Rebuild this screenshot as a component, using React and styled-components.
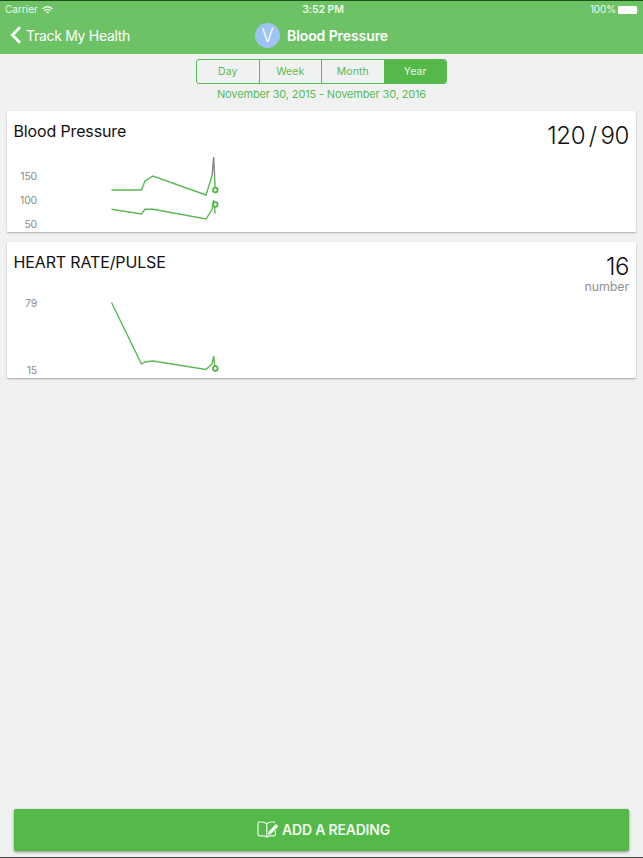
import React from 'react';
import styled, { createGlobalStyle } from 'styled-components';

const GlobalStyle = createGlobalStyle`
  * {
    box-sizing: border-box;
  }
  body {
    margin: 0;
    font-family: Inter, 'Liberation Sans', sans-serif;
    background-color: #f0f2f1;
  }
`;

const Screen = styled.div`
  width: 100%;
  height: 100vh;
  display: flex;
  flex-direction: column;
  overflow: hidden;
  border-top: 1px solid #1d5216;
  border-bottom: 1px solid #4b4d4c;
`;

const Header = styled.header`
  height: 53px;
  flex: none;
  color: white;
  background-color: #6cc265;
`;

const StatusBar = styled.div`
  height: 17px;
  padding: 0 4px 0 5px;
  display: grid;
  grid-template-columns: 1fr auto 1fr;
  align-items: center;
  font-size: 10px;
  line-height: 17px;
  color: #edf9ec;
`;

const Carrier = styled.div`
  display: flex;
  align-items: center;
  gap: 4px;
`;

const Clock = styled.div`
  padding-left: 2px;
  font-size: 10.5px;
  font-weight: 600;
  letter-spacing: -0.1px;
`;

const Battery = styled.div`
  display: flex;
  justify-content: flex-end;
  align-items: center;
  gap: 2px;
  letter-spacing: -0.1px;
`;

const NavBar = styled.nav`
  height: 34px;
  padding: 0 10px;
  display: grid;
  grid-template-columns: 1fr auto 1fr;
  align-items: center;
`;

const BackLink = styled.a`
  display: flex;
  align-items: center;
  gap: 4px;
  font-size: 14px;
  letter-spacing: -0.3px;
`;

const Title = styled.h1`
  margin: 0;
  display: flex;
  align-items: center;
  gap: 7px;
  font-size: 14px;
  font-weight: 600;
  letter-spacing: -0.09px;
`;

const Avatar = styled.span`
  width: 25px;
  height: 25px;
  border-radius: 50%;
  display: flex;
  justify-content: center;
  align-items: center;
  font-size: 18px;
  font-weight: 300;
  background-color: #9dc4f5;
`;

const RangePicker = styled.div`
  height: 57px;
  flex: none;
  padding-top: 5px;
  display: flex;
  flex-direction: column;
  align-items: center;
`;

const Segments = styled.div`
  width: 251px;
  height: 25px;
  display: flex;
  border: 1px solid #5bb955;
  border-radius: 3px;
  overflow: hidden;
`;

const Segment = styled.button`
  flex: 1;
  padding: 0;
  border: 0;
  border-right: ${(props) => (props.$last ? '0' : '1px solid #5bb955')};
  font-family: inherit;
  font-size: 10.5px;
  letter-spacing: 0.1px;
  color: ${(props) => (props.$active ? '#e6f6e4' : '#5bb955')};
  background-color: ${(props) => (props.$active ? '#55b949' : 'transparent')};
`;

const DateRange = styled.div`
  margin-top: 4px;
  font-size: 11px;
  line-height: 13px;
  letter-spacing: -0.15px;
  color: #5bb955;
`;

const Cards = styled.main`
  flex: 1;
  padding: 0 7px;
  display: flex;
  flex-direction: column;
  gap: 10px;
`;

const Card = styled.section`
  height: ${(props) => props.$height}px;
  flex: none;
  display: flex;
  flex-direction: column;
  background-color: white;
  border-radius: 1px;
  box-shadow: 0 1px 2px rgba(0, 0, 0, 0.3);
`;

const CardHeader = styled.div`
  height: 38px;
  flex: none;
  padding: 10px 7px 0 6.5px;
  display: flex;
  justify-content: space-between;
  align-items: flex-start;
`;

const CardTitle = styled.h2`
  margin: 0;
  font-size: 16px;
  line-height: 20px;
  font-weight: 400;
  letter-spacing: -0.14px;
  color: #111;
`;

const Reading = styled.div`
  padding-top: 1px;
  text-align: right;
`;

const Value = styled.div`
  font-size: 24px;
  line-height: 28px;
  font-weight: 300;
  letter-spacing: -0.4px;
  word-spacing: -2.6px;
  color: #111;
`;

const Unit = styled.div`
  margin-top: -1px;
  font-size: 12.5px;
  line-height: 13px;
  letter-spacing: -0.15px;
  color: #929292;
`;

const Chart = styled.svg`
  display: block;
  flex: none;

  text {
    font-size: 10.5px;
    letter-spacing: -0.2px;
    text-anchor: end;
    fill: #8b8b8b;
  }
  circle {
    fill: white;
    stroke: #4fb545;
    stroke-width: 1.8;
  }
`;

const Line = styled.polyline`
  fill: none;
  stroke: ${(props) => (props.$muted ? '#858585' : '#5bb955')};
  stroke-width: 1.4;
`;

const Footer = styled.footer`
  flex: none;
  padding: 0 14px 6px;
`;

const AddButton = styled.button`
  width: 100%;
  height: 42px;
  padding: 0 0 2px 4px;
  border: 0;
  border-radius: 2px;
  display: flex;
  justify-content: center;
  align-items: center;
  gap: 3px;
  font-family: inherit;
  font-size: 14px;
  font-weight: 600;
  letter-spacing: -0.2px;
  color: #f0faef;
  background-color: #55b949;
  box-shadow: 0 1px 3px rgba(0, 0, 0, 0.45);
`;

const WifiIcon = () => (
  <svg width="11" height="8" viewBox="0 0 11 8" fill="none" stroke="currentColor" strokeWidth="1.3">
    <path d="M0.6 3 Q5.5 -1.4 10.4 3" />
    <path d="M2.4 4.8 Q5.5 2 8.6 4.8" />
    <path d="M5.5 7.8 L3.8 6 Q5.5 4.7 7.2 6 Z" fill="currentColor" stroke="none" />
  </svg>
);

const BatteryIcon = () => (
  <svg width="21" height="8" viewBox="0 0 21 8" fill="white">
    <rect width="19" height="8" rx="1.2" />
    <path d="M19.6 2.5 Q21 4 19.6 5.5 Z" />
  </svg>
);

const BackIcon = () => (
  <svg width="12" height="18" viewBox="0 0 12 18" fill="none" stroke="white" strokeWidth="2.8">
    <path d="M10 1.2 L2.4 9 L10 16.8" />
  </svg>
);

const JournalIcon = () => (
  <svg width="22" height="17" viewBox="0 0 22 17" fill="none" stroke="currentColor" strokeWidth="1.2">
    <path d="M9.8 3 Q8 0.9 5 1 H2.4 Q1 1 1 2.4 V13.2 Q1 14.8 2.6 14.8 H5.6 Q8.4 14.8 9.8 16 V3 Q11.6 0.9 14.6 1 H16.6 Q17.6 1 18 1.8" />
    <path d="M9.8 16 Q11.4 14.8 14 14.8 H17 Q18.4 14.8 18.4 13.4 V9.6" />
    <path d="M18.9 2.9 L21.4 5.2 L14.2 12.8 L10.9 14.2 L11.8 10.6 Z" fill="currentColor" stroke="none" />
  </svg>
);

const periods = ['Day', 'Week', 'Month', 'Year'];

const App = () => {
  return (
    <Screen>
      <GlobalStyle />
      <Header>
        <StatusBar>
          <Carrier>Carrier <WifiIcon /></Carrier>
          <Clock>3:52 PM</Clock>
          <Battery>100% <BatteryIcon /></Battery>
        </StatusBar>
        <NavBar>
          <BackLink><BackIcon />Track My Health</BackLink>
          <Title><Avatar>V</Avatar>Blood Pressure</Title>
        </NavBar>
      </Header>
      <RangePicker>
        <Segments>
          {periods.map((period, i) => (
            <Segment key={period} $last={i === periods.length - 1} $active={period === 'Year'}>{period}</Segment>
          ))}
        </Segments>
        <DateRange>November 30, 2015 - November 30, 2016</DateRange>
      </RangePicker>
      <Cards>
        <Card $height={121}>
          <CardHeader>
            <CardTitle>Blood Pressure</CardTitle>
            <Reading>
              <Value>120 / 90</Value>
            </Reading>
          </CardHeader>
          <Chart width="629" height="83" viewBox="7 149 629 83">
            <text x="37" y="180">150</text>
            <text x="37" y="204">100</text>
            <text x="37" y="228">50</text>
            <Line points="111.5,190 141.5,190 145,181 153,176 206,195 212,176" />
            <Line $muted points="212,176 213.7,157 214.6,176" />
            <Line points="214.6,176 215.2,190" />
            <Line points="111.5,209.3 141.5,214 145,209.3 153,209.3 206,219 212,209.5 213.7,200 215.2,213.5" />
            <circle cx="215.3" cy="190" r="2.3" />
            <circle cx="215.3" cy="204.5" r="2.3" />
          </Chart>
        </Card>
        <Card $height={136}>
          <CardHeader>
            <CardTitle>HEART RATE/PULSE</CardTitle>
            <Reading>
              <Value>16</Value>
              <Unit>number</Unit>
            </Reading>
          </CardHeader>
          <Chart width="629" height="98" viewBox="7 280 629 98">
            <text x="37" y="307">79</text>
            <text x="37" y="374">15</text>
            <Line points="111.5,302.5 141.5,364 145,362 153,361 206,369.5 212,364 213.7,356 215,368" />
            <circle cx="215.3" cy="368.5" r="2.3" />
          </Chart>
        </Card>
      </Cards>
      <Footer>
        <AddButton><JournalIcon />ADD A READING</AddButton>
      </Footer>
    </Screen>
  );
};

export default App;
